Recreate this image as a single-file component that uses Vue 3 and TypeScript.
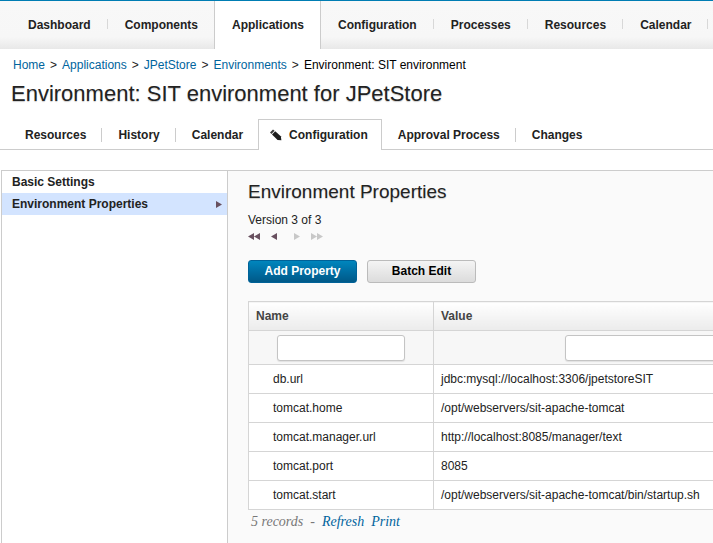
<script setup lang="ts">
import { ref, computed } from 'vue'

interface Property {
  name: string
  value: string
}

const mainTabs: string[] = [
  'Dashboard',
  'Components',
  'Applications',
  'Configuration',
  'Processes',
  'Resources',
  'Calendar',
]
const crumbs: string[] = ['Home', 'Applications', 'JPetStore', 'Environments']
const subTabs: string[] = [
  'Resources',
  'History',
  'Calendar',
  'Configuration',
  'Approval Process',
  'Changes',
]
const sections: string[] = ['Basic Settings', 'Environment Properties']

const activeMain = 'Applications'
const activeSub = 'Configuration'
const activeSection = 'Environment Properties'

const properties: Property[] = [
  { name: 'db.url', value: 'jdbc:mysql://localhost:3306/jpetstoreSIT' },
  { name: 'tomcat.home', value: '/opt/webservers/sit-apache-tomcat' },
  { name: 'tomcat.manager.url', value: 'http://localhost:8085/manager/text' },
  { name: 'tomcat.port', value: '8085' },
  { name: 'tomcat.start', value: '/opt/webservers/sit-apache-tomcat/bin/startup.sh' },
]

const nameFilter = ref('')
const valueFilter = ref('')
const visible = computed(() =>
  properties.filter(
    (p) => p.name.includes(nameFilter.value) && p.value.includes(valueFilter.value),
  ),
)
</script>

<template>
  <div class="page">
    <nav class="main-nav" aria-label="Main">
      <a
        v-for="tab in mainTabs"
        :key="tab"
        href="#"
        class="main-tab"
        :class="{ active: tab === activeMain }"
        >{{ tab }}</a
      >
    </nav>

    <nav class="crumbs" aria-label="Breadcrumb">
      <template v-for="crumb in crumbs" :key="crumb">
        <a href="#">{{ crumb }}</a>
        <span>&gt;</span>
      </template>
      <span class="current">Environment: SIT environment</span>
    </nav>

    <h1>Environment: SIT environment for JPetStore</h1>

    <nav class="sub-nav" aria-label="Environment">
      <a
        v-for="tab in subTabs"
        :key="tab"
        href="#"
        class="sub-tab"
        :class="{ active: tab === activeSub }"
      >
        <svg
          v-if="tab === activeSub"
          class="pencil"
          width="12"
          height="12"
          viewBox="0 0 12 12"
          aria-hidden="true"
        >
          <path d="M0 3.4 L3 0.4 L4.6 1.8 L1.5 4.9 Z" fill="#3a3a3a" />
          <path d="M2 5.4 L5.2 2.2 L10.8 7.2 L11.4 11.3 L7.6 11 Z" fill="#1d1d1d" />
        </svg>
        <span>{{ tab }}</span>
      </a>
    </nav>

    <div class="panel">
      <aside class="sidebar">
        <a
          v-for="section in sections"
          :key="section"
          href="#"
          class="section"
          :class="{ active: section === activeSection }"
        >
          <span>{{ section }}</span>
          <svg
            v-if="section === activeSection"
            width="6"
            height="7"
            viewBox="0 0 6 7"
            aria-hidden="true"
          >
            <path d="M0 0 L6 3.5 L0 7 Z" fill="#68505f" />
          </svg>
        </a>
      </aside>

      <main class="content">
        <h2>Environment Properties</h2>
        <p class="version">Version 3 of 3</p>

        <div class="pager">
          <button type="button" aria-label="First version">
            <svg width="12" height="7" viewBox="0 0 12 7">
              <path d="M6 0 L0 3.5 L6 7 Z M12 0 L6 3.5 L12 7 Z" />
            </svg>
          </button>
          <button type="button" aria-label="Previous version">
            <svg width="6" height="7" viewBox="0 0 6 7"><path d="M6 0 L0 3.5 L6 7 Z" /></svg>
          </button>
          <button type="button" class="next" aria-label="Next version" disabled>
            <svg width="6" height="7" viewBox="0 0 6 7"><path d="M0 0 L6 3.5 L0 7 Z" /></svg>
          </button>
          <button type="button" aria-label="Last version" disabled>
            <svg width="12" height="7" viewBox="0 0 12 7">
              <path d="M0 0 L6 3.5 L0 7 Z M6 0 L12 3.5 L6 7 Z" />
            </svg>
          </button>
        </div>

        <div class="actions">
          <button type="button" class="button primary">Add Property</button>
          <button type="button" class="button">Batch Edit</button>
        </div>

        <table>
          <colgroup>
            <col class="name-col" />
            <col />
          </colgroup>
          <thead>
            <tr class="head">
              <th scope="col">Name</th>
              <th scope="col">Value</th>
            </tr>
            <tr class="filters">
              <td><input v-model="nameFilter" type="text" aria-label="Filter by name" /></td>
              <td><input v-model="valueFilter" type="text" aria-label="Filter by value" /></td>
            </tr>
          </thead>
          <tbody>
            <tr v-for="property in visible" :key="property.name">
              <td class="name">{{ property.name }}</td>
              <td>{{ property.value }}</td>
            </tr>
          </tbody>
        </table>

        <footer class="summary">
          <span>{{ visible.length }} records</span>
          <span>-</span>
          <a href="#">Refresh</a>
          <a href="#">Print</a>
        </footer>
      </main>
    </div>
  </div>
</template>

<style>
body {
  background: #fff;
}
</style>

<style scoped>
.page {
  display: flex;
  flex-direction: column;
  min-height: 100vh;
  overflow: hidden;
  color: #222;
  font-family: 'Liberation Sans', Arial, sans-serif;
  font-size: 12px;
  line-height: 16px;
}

*,
*::before,
*::after {
  box-sizing: border-box;
}

a {
  color: #00649d;
  text-decoration: none;
}

.main-nav {
  display: flex;
  flex-shrink: 0;
  height: 49px;
  padding-left: 11px;
  border-top: 1px solid #007db3;
  background: linear-gradient(#f8f8f8 0%, #f7f7f7 75%, #e8e8e8 100%);
}

.main-tab {
  display: flex;
  flex-shrink: 0;
  align-items: center;
  padding: 0 16px 0 17px;
  color: #222;
  font-weight: bold;
  white-space: nowrap;
}

.main-tab::after {
  width: 1px;
  height: 10px;
  margin: 0 -17px 2px 16px;
  background: #d8d8d8;
  content: '';
}

.main-tab:not(.active) {
  border-right: 1px solid transparent;
}

.main-tab.active {
  margin-left: -1px;
  border: solid #ccc;
  border-width: 0 1px;
  background: #fff;
}

.main-tab.active::after {
  display: none;
}

.crumbs {
  display: flex;
  gap: 5px;
  padding: 8px 13px 0;
  white-space: nowrap;
}

.crumbs .current {
  color: #000;
}

h1,
h2,
p {
  margin: 0;
}

h1,
h2 {
  font-weight: normal;
  text-shadow: 0 1px 1px #ccc;
}

h1 {
  padding: 8px 11px 0;
  font-size: 22px;
  line-height: 26px;
}

.sub-nav {
  display: flex;
  height: 43px;
  padding: 12px 0 0 9px;
  border-bottom: 1px solid #ccc;
}

.sub-tab {
  display: flex;
  flex-shrink: 0;
  align-items: center;
  height: 31px;
  padding: 0 15px 0 16px;
  border-right: 1px solid transparent;
  color: #222;
  font-weight: bold;
  white-space: nowrap;
}

.sub-tab:not(.active)::after {
  width: 1px;
  height: 14px;
  margin: 0 -16px 0 15px;
  background: #ccc;
  content: '';
}

.sub-tab.active {
  gap: 7px;
  margin-left: -1px;
  padding: 0 13px 0 11px;
  border: 1px solid #ccc;
  border-bottom: 0;
  background: #fff;
}

/* the open tab's own edges stand in for its neighbour's divider */
.sub-tab:nth-child(3)::after,
.sub-tab:last-child::after,
.main-tab:nth-child(2)::after {
  display: none;
}

.panel {
  display: flex;
  flex: 1;
  margin: 20px 0 0 1px;
  border-top: 1px solid #ccc;
  border-left: 1px solid #ccc;
}

.sidebar {
  flex: 0 0 226px;
  border-right: 1px solid #ccc;
}

.section {
  display: flex;
  align-items: center;
  justify-content: space-between;
  height: 22px;
  padding: 0 5px 0 10px;
  color: #222;
  font-weight: bold;
}

.section.active {
  background: #d3e4ff;
}

.content {
  flex: 1;
  min-width: 0;
  padding: 8px 0 12px 20px;
  background: #fafafa;
}

h2 {
  font-size: 19px;
  line-height: 26px;
}

.version {
  padding-top: 7px;
}

.pager {
  display: flex;
  gap: 11px;
  padding-top: 5px;
}

.pager button {
  display: flex;
  padding: 0;
  border: 0;
  background: none;
}

.pager svg {
  fill: #68505f;
}

.pager button:disabled svg {
  fill: #c8c8c8;
}

.pager .next {
  margin-left: 6px;
}

.actions {
  display: flex;
  gap: 10px;
  padding: 20px 0 18px;
}

.button {
  width: 109px;
  height: 23px;
  padding: 0 0 2px;
  border: 1px solid #bbb;
  border-radius: 3px;
  background: linear-gradient(#f4f4f4, #dcdcdc);
  color: #000;
  font: bold 12px 'Liberation Sans', Arial, sans-serif;
}

.button.primary {
  border-color: #006298;
  background: linear-gradient(#0086bd, #006ea3 50%, #005988);
  color: #fff;
}

/* the value column runs on past the window's edge */
table {
  width: 100%;
  min-width: 1058px;
  border-collapse: collapse;
  table-layout: fixed;
  background: #fff;
}

.name-col {
  width: 185px;
}

th,
td {
  height: 29px;
  padding: 0 7px;
  border: 1px solid #d5d5d5;
  text-align: left;
  white-space: nowrap;
}

.head th {
  background: linear-gradient(#fff, #ebebeb);
  color: #444;
}

.filters td {
  height: 34px;
  padding: 0;
  background: #f7f7f7;
}

.filters input {
  display: block;
  width: 70%;
  height: 26px;
  margin: 0 auto;
  padding: 0 6px;
  border: 1px solid #c4c4c4;
  border-radius: 3px;
  background: #fff;
  box-shadow: 0 1px 1px #e0e0e0;
  font: 12px 'Liberation Sans', Arial, sans-serif;
}

.name {
  padding-left: 24px;
}

.summary {
  display: flex;
  gap: 7px;
  padding: 4px 3px 0;
  color: #777;
  font: italic 14px/16px 'Liberation Serif', serif;
}
</style>
